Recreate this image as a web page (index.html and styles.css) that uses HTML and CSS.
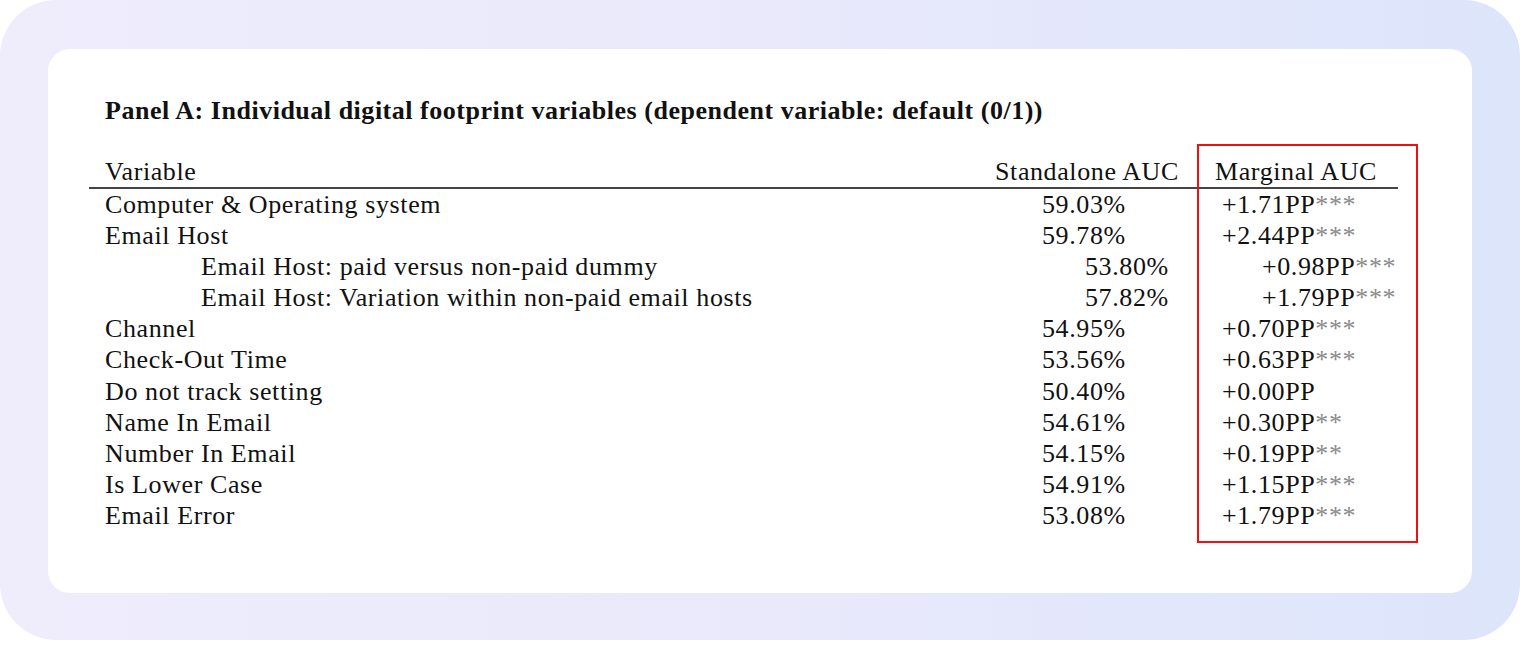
FILE: index.html
```html
<!DOCTYPE html>
<html>
<head>
<meta charset="utf-8">
<link rel="stylesheet" href="styles.css">
</head>
<body>
<div class="frame">
  <div class="card">
    <h1 class="title">Panel A: Individual digital footprint variables (dependent variable: default (0/1))</h1>
    <div class="table">
      <div class="row head">
        <div class="c1">Variable</div>
        <div class="c2 h">Standalone AUC</div>
        <div class="c3 h">Marginal AUC</div>
      </div>
      <div class="row"><div class="c1">Computer &amp; Operating system</div><div class="c2">59.03%</div><div class="c3">+1.71PP<span class="st">***</span></div></div>
      <div class="row"><div class="c1">Email Host</div><div class="c2">59.78%</div><div class="c3">+2.44PP<span class="st">***</span></div></div>
      <div class="row sub"><div class="c1">Email Host: paid versus non-paid dummy</div><div class="c2">53.80%</div><div class="c3">+0.98PP<span class="st">***</span></div></div>
      <div class="row sub"><div class="c1">Email Host: Variation within non-paid email hosts</div><div class="c2">57.82%</div><div class="c3">+1.79PP<span class="st">***</span></div></div>
      <div class="row"><div class="c1">Channel</div><div class="c2">54.95%</div><div class="c3">+0.70PP<span class="st">***</span></div></div>
      <div class="row"><div class="c1">Check-Out Time</div><div class="c2">53.56%</div><div class="c3">+0.63PP<span class="st">***</span></div></div>
      <div class="row"><div class="c1">Do not track setting</div><div class="c2">50.40%</div><div class="c3">+0.00PP</div></div>
      <div class="row"><div class="c1">Name In Email</div><div class="c2">54.61%</div><div class="c3">+0.30PP<span class="st">**</span></div></div>
      <div class="row"><div class="c1">Number In Email</div><div class="c2">54.15%</div><div class="c3">+0.19PP<span class="st">**</span></div></div>
      <div class="row"><div class="c1">Is Lower Case</div><div class="c2">54.91%</div><div class="c3">+1.15PP<span class="st">***</span></div></div>
      <div class="row"><div class="c1">Email Error</div><div class="c2">53.08%</div><div class="c3">+1.79PP<span class="st">***</span></div></div>
      <div class="highlight"></div>
    </div>
  </div>
</div>
</body>
</html>
```

FILE: styles.css
```css
html, body {
  margin: 0;
  padding: 0;
  background: #ffffff;
}
body {
  width: 1520px;
  height: 648px;
  font-family: "Liberation Serif", "Times New Roman", serif;
  color: #111111;
}
.frame {
  width: 1520px;
  height: 640px;
  box-sizing: border-box;
  padding: 49px 48px 47px 48px;
  border-radius: 56px;
  background: linear-gradient(90deg, #efedfc 0%, #e9e9fb 50%, #dde5fb 100%);
}
.card {
  height: 544px;
  background: #ffffff;
  border-radius: 22px;
  box-sizing: border-box;
  padding: 47px 0 0 41px;
}
.title {
  margin: 0;
  padding-left: 16px;
  font-size: 26px;
  letter-spacing: 0.52px;
  line-height: 30px;
  font-weight: bold;
  color: #111111;
}
.table {
  position: relative;
  margin-top: 31px;
  width: 1309px;
  font-size: 26px;
  letter-spacing: 0.6px;
}
.row {
  display: grid;
  grid-template-columns: 891px 210px 208px;
  line-height: 31.1px;
  height: 31.1px;
  white-space: nowrap;
}
.row.head {
  height: 30px;
  line-height: 30px;
  border-bottom: 2px solid #444444;
}
.c1 {
  padding-left: 16px;
}
.c2 {
  padding-left: 62px;
}
.c3 {
  padding-left: 32px;
}
.c2.h {
  padding-left: 15px;
}
.c3.h {
  padding-left: 25px;
}
.sub .c1 {
  padding-left: 112px;
}
.sub .c2 {
  padding-left: 105px;
}
.sub .c3 {
  padding-left: 72px;
}
.st {
  color: #8a8a8a;
}
.highlight {
  position: absolute;
  left: 1108px;
  top: -13px;
  width: 221px;
  height: 399px;
  box-sizing: border-box;
  border: 2.5px solid #f01010;
}
```
